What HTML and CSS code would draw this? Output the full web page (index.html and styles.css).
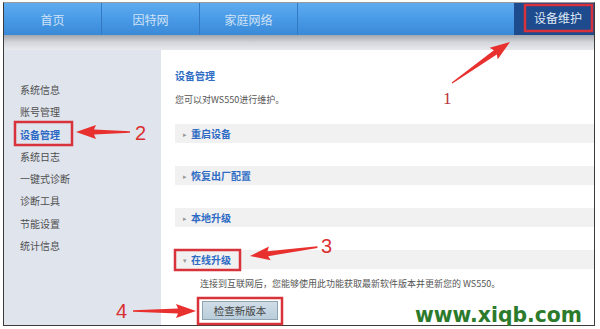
FILE: index.html
```html
<!DOCTYPE html>
<html lang="zh-CN">
<head>
  <meta charset="UTF-8" />
  <title>设备维护</title>
  <link rel="stylesheet" href="styles.css">
</head>
<body>
  <div class="frame">
    <div class="nav">
      <div class="tab">首页</div>
      <div class="tab">因特网</div>
      <div class="tab">家庭网络</div>
      <div class="nav-space"></div>
      <div class="tab active">设备维护</div>
    </div>
    <div class="shade"></div>
    <div class="main">
      <ul class="side">
        <li>系统信息</li>
        <li>账号管理</li>
        <li class="current">设备管理</li>
        <li>系统日志</li>
        <li>一键式诊断</li>
        <li>诊断工具</li>
        <li>节能设置</li>
        <li>统计信息</li>
      </ul>
      <div class="content">
        <div class="title">设备管理</div>
        <p class="desc">您可以对WS550进行维护。</p>
        <div class="section"><span class="arrow">&#9656;</span>重启设备</div>
        <div class="section"><span class="arrow">&#9656;</span>恢复出厂配置</div>
        <div class="section"><span class="arrow">&#9656;</span>本地升级</div>
        <div class="section"><span class="arrow">&#9662;</span>在线升级</div>
        <p class="desc indent">连接到互联网后，您能够使用此功能获取最新软件版本并更新您的 WS550。</p>
        <button class="check-btn">检查新版本</button>
      </div>
    </div>
  </div>

  <!-- red annotations drawn over the screenshot -->
  <svg class="notes" width="600" height="329" viewBox="0 0 600 329">
    <g fill="none" stroke="#d8323a" stroke-width="2.5">
      <rect x="525" y="5" width="67" height="26" />
      <rect x="15" y="122" width="57" height="23" />
      <rect x="175" y="250" width="65" height="20" />
      <rect x="198" y="298" width="84" height="26" />
    </g>
    <g fill="#e8312f">
      <polygon transform="translate(510 42) rotate(144.7)" points="0,0 20,-7 18,-2.5 71,-0.6 71,0.6 18,2.5 20,7" />
      <polygon transform="translate(76 132)" points="0,0 20,-7 18,-2.5 54,-0.8 54,0.8 18,2.5 20,7" />
      <polygon transform="translate(250 256) rotate(-7.5)" points="0,0 20,-7 18,-2.5 68,-0.8 68,0.8 18,2.5 20,7" />
      <polygon transform="translate(196 311) rotate(180)" points="0,0 20,-7 18,-2.5 63,-0.8 63,0.8 18,2.5 20,7" />
    </g>
    <g class="num">
      <text x="443" y="104" class="one">1</text>
      <text x="135" y="140">2</text>
      <text x="321" y="253">3</text>
      <text x="116" y="318">4</text>
    </g>
    <text class="mark" x="415" y="322" textLength="167" lengthAdjust="spacingAndGlyphs">www.xiqb.com</text>
  </svg>
</body>
</html>
```

FILE: styles.css
```css
body {
  margin: 0;
  background: #fff;
  font-family: "Noto Sans CJK SC", "Liberation Sans", sans-serif;
  position: relative;
  width: 600px;
  height: 329px;
  overflow: hidden;
}

.frame {
  margin: 2px 0 0 3px;
  width: 592px;
  height: 324px;
  box-sizing: border-box;
  border: 1px solid #3b3b3b;
  border-top-color: #9a9a9a;
  display: flex;
  flex-direction: column;
  background: #fff;
}

/* top navigation */
.nav {
  height: 32px;
  display: flex;
  background: linear-gradient(#5eabf0, #4597e4 60%, #3a89d6);
}
.tab {
  width: 97px;
  border-right: 1px solid #3479c2;
  display: flex;
  align-items: center;
  justify-content: center;
  color: #cfe2f6;
  font-size: 12px;
}
.nav-space {
  flex: 1;
}
.tab.active {
  width: 80px;
  border-right: none;
  background: #1e4b8d;
  color: #dfe8f5;
  padding-left: 8px;
  padding-bottom: 4px;
  box-sizing: border-box;
}

.shade {
  height: 15px;
  background: linear-gradient(#a3a8ae, #d3d6db 50%, #e7e9ed);
}

.main {
  flex: 1;
  display: flex;
}

/* left menu */
.side {
  width: 157px;
  margin: 0;
  padding: 29px 0 0 16px;
  box-sizing: border-box;
  list-style: none;
  background: #dfe4ed;
}
.side li {
  line-height: 22.3px;
  font-size: 10px;
  color: #4f4f4f;
}
.side li.current {
  color: #2b68c6;
  font-weight: bold;
}

/* right content */
.content {
  flex: 1;
  padding: 18px 0 0 14px;
}
.title {
  line-height: 16px;
  font-size: 10px;
  font-weight: bold;
  color: #2e6bc4;
}
.desc {
  margin: 9px 0 0;
  line-height: 14px;
  font-size: 9px;
  color: #555;
}
.section {
  height: 19px;
  margin-top: 23px;
  padding-left: 8px;
  display: flex;
  align-items: center;
  background: #f1f1f1;
  font-size: 10px;
  font-weight: bold;
  color: #2e6bc4;
}
.desc + .section {
  margin-top: 17px;
}
.section .arrow {
  font-size: 7px;
  color: #999;
  font-weight: normal;
  margin-right: 4px;
}
.desc.indent {
  margin: 8px 0 0 25px;
}
.check-btn {
  display: block;
  margin: 10px 0 0 27px;
  width: 76px;
  height: 19px;
  padding: 0;
  border: 1px solid #8fa3b3;
  background: linear-gradient(#d0dde7, #b9cddb);
  font-family: inherit;
  font-size: 10.5px;
  color: #444;
}

/* annotation layer */
.notes {
  position: absolute;
  top: 0;
  left: 0;
  pointer-events: none;
}
.num text {
  font-family: "Liberation Sans", sans-serif;
  font-size: 20px;
  fill: #d9302f;
}
.num text.one {
  font-family: "Liberation Serif", serif;
  font-size: 17px;
  fill: #b8333a;
}
.mark {
  font-family: "DejaVu Sans", sans-serif;
  font-weight: bold;
  font-size: 22px;
  fill: #2c7a2c;
}
```
